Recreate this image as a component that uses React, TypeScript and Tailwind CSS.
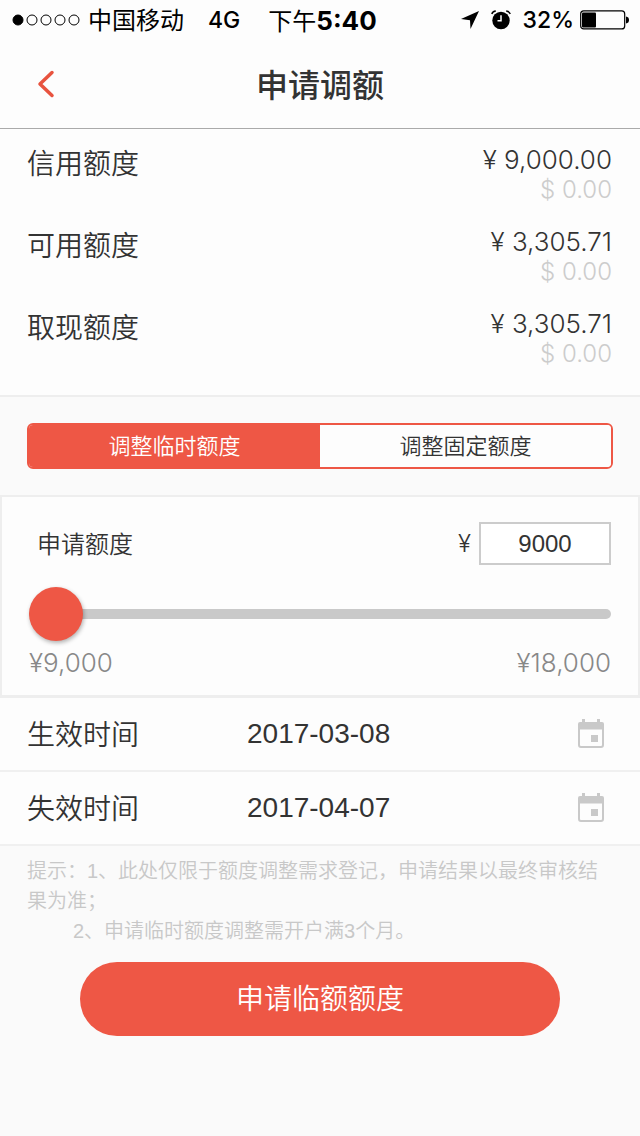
import React, { useState } from 'react'

const SANS = "font-['Liberation_Sans','Noto_Sans_CJK_SC',sans-serif]"
const ROUND = "font-['Inter','Noto_Sans_CJK_SC',sans-serif]"

const LIMITS = [
  { label: '信用额度', cny: '9,000.00', usd: '0.00' },
  { label: '可用额度', cny: '3,305.71', usd: '0.00' },
  { label: '取现额度', cny: '3,305.71', usd: '0.00' },
]

const TABS = [
  { id: 'temporary', label: '调整临时额度' },
  { id: 'fixed', label: '调整固定额度' },
]

const DATES = [
  { id: 'start', label: '生效时间', value: '2017-03-08' },
  { id: 'end', label: '失效时间', value: '2017-04-07' },
]

const SignalDots = () => (
  <svg width="68" height="12" viewBox="0 0 68 12" aria-hidden="true">
    {[0, 1, 2, 3, 4].map((i) => (
      <circle key={i} cx={6 + i * 14} cy="6" r="5" fill={i === 0 ? '#000' : 'none'} stroke="#000" />
    ))}
  </svg>
)

const LocationIcon = () => (
  <svg width="18" height="18" viewBox="0 0 18 18" aria-hidden="true">
    <path d="M18 0 9.5 18 9 9.2 0 8Z" fill="#000" />
  </svg>
)

const AlarmIcon = () => (
  <svg width="20" height="20" viewBox="0 0 20 20" fill="none" aria-hidden="true">
    <circle cx="10" cy="10.5" r="8.7" fill="#000" />
    <path d="M.8 4C1.4 2.2 2.8 1.2 4.8 1M19.2 4C18.6 2.2 17.2 1.2 15.2 1" stroke="#000" strokeWidth="1.5" />
    <path d="M10 5.2v5.5H6.5" stroke="#fff" strokeWidth="1.5" />
  </svg>
)

const BatteryIcon = () => (
  <svg width="50" height="20" viewBox="0 0 50 20" aria-hidden="true">
    <rect x="0.7" y="0.9" width="44" height="18" rx="3" fill="none" stroke="#000" strokeWidth="1.2" />
    <rect x="2" y="2.5" width="14" height="15" rx="1" fill="#000" />
    <path d="M46 6.5c2 .3 3 1.5 3 3.5s-1 3.2-3 3.5Z" fill="#000" />
  </svg>
)

const CalendarIcon = () => (
  <svg width="28" height="30" viewBox="0 0 28 30" aria-hidden="true">
    <rect x="2" y="5" width="24" height="23" rx="2" fill="none" stroke="#c9c9c9" strokeWidth="2" />
    <path d="M1 10.5V5q0-2 2-2h2V0h3v3h12V0h3v3h2q2 0 2 2v5.500Z" fill="#c9c9c9" />
    <rect x="14" y="16" width="7" height="7" fill="#c9c9c9" />
  </svg>
)

function StatusBar() {
  return (
    <div className={`flex items-center h-10 px-3 pr-2.5 text-2xl font-medium text-black whitespace-nowrap ${ROUND}`}>
      <SignalDots />
      <span className="ml-2 pt-0.5 font-normal">中国移动</span>
      <span className="ml-6 text-[23px]">4G</span>
      <span className="ml-7 pt-0.5 font-normal">
        下午<b className="font-bold text-[26px]">5:40</b>
      </span>
      <div className="flex items-center ml-auto">
        <LocationIcon />
        <span className="ml-3 mr-3"><AlarmIcon /></span>
        <span className="mr-1.5 text-[23px]">32%</span>
        <BatteryIcon />
      </div>
    </div>
  )
}

export default function App() {
  const [tab, setTab] = useState('temporary')
  const [amount, setAmount] = useState(9000)
  const [dates, setDates] = useState<Record<string, string>>({ start: DATES[0].value, end: DATES[1].value })

  return (
    <div lang="zh-CN" className={`min-h-screen bg-[#fafafa] text-[#333] ${SANS}`}>
      <div className="bg-[#fdfdfd]">
        <StatusBar />

        {/* Title bar */}
        <header className="grid grid-cols-[80px_1fr_80px] items-center h-[89px] border-b border-[#aaa]">
          <button type="button" aria-label="返回" className="flex justify-center pl-3">
            <svg width="18" height="28" viewBox="0 0 18 28" fill="none" aria-hidden="true">
              <path d="M15 2.5 3 14l12 11.5" stroke="#e8533f" strokeWidth="3.5" strokeLinecap="round" strokeLinejoin="round" />
            </svg>
          </button>
          <h1 className="pt-1 text-center text-[32px] leading-10 font-medium">申请调额</h1>
        </header>

        {/* Current limits */}
        <dl className="flex flex-col gap-[22px] h-[268px] pt-4 pl-[27px] pr-7 border-b-2 border-[#eee]">
          {LIMITS.map((l) => (
            <div key={l.label} className="flex justify-between">
              <dt className="pt-0.5 text-[28px] leading-9 font-[350]">{l.label}</dt>
              <dd className={`text-right font-[350] ${ROUND}`}>
                <div className="text-[26px] leading-[30px]">¥ {l.cny}</div>
                <div className="text-2xl leading-[30px] font-light text-[#ccc]">$ {l.usd}</div>
              </dd>
            </div>
          ))}
        </dl>
      </div>

      {/* Limit type */}
      <div className="px-[27px] py-[26px]">
        <div className="grid grid-cols-2 h-[46px] rounded-md border-2 border-[#ee5745] overflow-hidden">
          {TABS.map((t) => (
            <button
              key={t.id}
              type="button"
              aria-pressed={tab === t.id}
              onClick={() => setTab(t.id)}
              className={`pt-0.5 text-[22px] leading-8 font-[350] ${tab === t.id ? 'bg-[#ee5745] text-white' : 'bg-[#fdfdfd] text-[#333]'}`}
            >
              {t.label}
            </button>
          ))}
        </div>
      </div>

      {/* Requested amount */}
      <section className="h-[203px] pt-[25px] px-[27px] bg-[#fdfdfd] border-2 border-b-3 border-[#eee]">
        <div className="flex items-center pl-2 text-2xl">
          <label htmlFor="amount" className="pt-0.5 font-[350]">申请额度</label>
          <span className={`ml-auto mr-2 font-[350] ${ROUND}`}>¥</span>
          <input
            id="amount"
            type="text"
            inputMode="numeric"
            value={amount}
            onChange={(e) => setAmount(Number(e.target.value) || 0)}
            className="w-[132px] h-[43px] border-2 border-[#ccc] bg-white text-center"
          />
        </div>
        <input
          type="range"
          aria-label="申请额度"
          min={9000}
          max={18000}
          step={100}
          value={amount}
          onChange={(e) => setAmount(Number(e.target.value))}
          className="block w-full h-[54px] mt-[22px] appearance-none bg-transparent [&::-webkit-slider-runnable-track]:h-2.5 [&::-webkit-slider-runnable-track]:rounded-full [&::-webkit-slider-runnable-track]:bg-[#c9c9c9] [&::-webkit-slider-thumb]:appearance-none [&::-webkit-slider-thumb]:size-[54px] [&::-webkit-slider-thumb]:-mt-[22px] [&::-webkit-slider-thumb]:rounded-full [&::-webkit-slider-thumb]:bg-[#ee5745] [&::-webkit-slider-thumb]:shadow-[1px_2px_4px_rgba(0,0,0,0.3)]"
        />
        <div className={`flex justify-between mt-1.5 text-[26px] leading-8 font-light text-[#888] ${ROUND}`}>
          <span>¥9,000</span>
          <span>¥18,000</span>
        </div>
      </section>

      {/* Validity dates */}
      <div className="bg-[#fdfdfd]">
        {DATES.map((d) => (
          <div key={d.id} className="grid grid-cols-[220px_1fr_28px] items-center h-[74px] pl-[27px] pr-[35px] border-b-2 border-[#f0f0f0]">
            <label htmlFor={d.id} className="pt-1 text-[28px] leading-9 font-[350]">{d.label}</label>
            <input
              id={d.id}
              type="text"
              value={dates[d.id]}
              onChange={(e) => setDates({ ...dates, [d.id]: e.target.value })}
              className="min-w-0 bg-transparent text-[28px] leading-9"
            />
            <button type="button" aria-label={`选择${d.label}`}>
              <CalendarIcon />
            </button>
          </div>
        ))}
      </div>

      <div className="px-[27px] pt-2.5 text-xl leading-[30px] font-[350] text-[#c8c8c8]">
        <p>提示：1、此处仅限于额度调整需求登记，申请结果以最终审核结果为准；</p>
        <p className="pl-[46px]">2、申请临时额度调整需开户满3个月。</p>
      </div>

      <div className="px-20 pt-4">
        <button type="button" className="block w-full h-[74px] pt-0.5 rounded-full bg-[#ee5745] text-[28px] leading-9 font-[350] text-white">
          申请临额额度
        </button>
      </div>
    </div>
  )
}
